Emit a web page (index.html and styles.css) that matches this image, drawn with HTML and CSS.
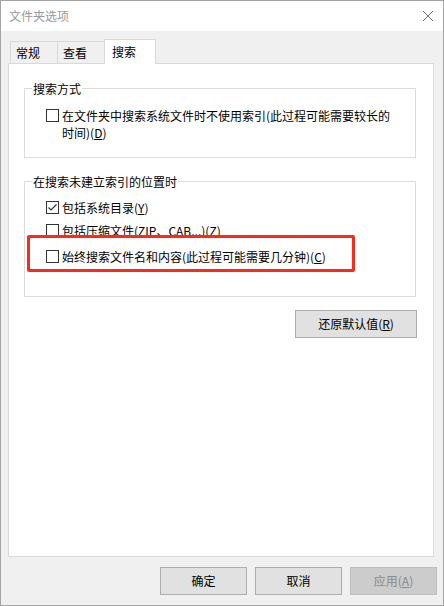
FILE: index.html
```html
<!DOCTYPE html>
<html lang="zh-CN">
<head>
<meta charset="utf-8">
<title>文件夹选项</title>
<link rel="stylesheet" href="styles.css">
</head>
<body>
<div class="window">
  <div class="titlebar">
    <span class="title">文件夹选项</span>
    <svg class="close" width="12" height="12" viewBox="0 0 12 12"><path d="M1 1 L11 11 M11 1 L1 11" stroke="#6e6e6e" stroke-width="1" fill="none"/></svg>
  </div>
  <div class="body">
    <div class="tabs">
      <div class="tab">常规</div>
      <div class="tab">查看</div>
      <div class="tab active">搜索</div>
    </div>
    <div class="panel">
      <div class="group g1">
        <div class="legend">搜索方式</div>
        <div class="row r1">
          <span class="cb"></span>
          <span class="label">在文件夹中搜索系统文件时不使用索引(此过程可能需要较长的<br>时间)(<u>D</u>)</span>
        </div>
      </div>
      <div class="group g2">
        <div class="legend">在搜索未建立索引的位置时</div>
        <div class="row r2">
          <span class="cb checked"><svg width="11" height="11" viewBox="0 0 11 11"><path d="M1.5 5.5 L4 8 L9.5 2.5" stroke="#333" stroke-width="1.2" fill="none"/></svg></span>
          <span class="label">包括系统目录(<u>Y</u>)</span>
        </div>
        <div class="row r3">
          <span class="cb"></span>
          <span class="label">包括压缩文件(ZIP、CAB...)(<u>Z</u>)</span>
        </div>
        <div class="row r4">
          <span class="cb"></span>
          <span class="label">始终搜索文件名和内容(此过程可能需要几分钟)(<u>C</u>)</span>
        </div>
      </div>
      <div class="reset-row">
        <button class="btn reset">还原默认值(<u>R</u>)</button>
      </div>
    </div>
    <div class="footer">
      <button class="btn">确定</button>
      <button class="btn">取消</button>
      <button class="btn disabled">应用(<u>A</u>)</button>
    </div>
  </div>
  <div class="highlight"></div>
</div>
</body>
</html>
```
FILE: styles.css
```css
* { box-sizing: border-box; }
html, body { margin: 0; padding: 0; background: #fff; }
body {
  font-family: "Noto Sans CJK SC", "Noto Sans", sans-serif;
  font-size: 12px;
  color: #000;
}
.window {
  position: relative;
  width: 444px;
  height: 606px;
  border: 1px solid #a3a3a3;
  background: #f0f0f0;
  display: flex;
  flex-direction: column;
}
.titlebar {
  height: 30px;
  background: #fff;
  display: flex;
  align-items: center;
  justify-content: space-between;
  padding: 0 9px 0 8px;
}
.title {
  color: #9a9a9a;
  font-size: 12px;
  line-height: 16px;
}
.close { display: block; }
.body {
  padding: 8px 8px 0 7px;
  flex: 1;
  display: flex;
  flex-direction: column;
}
.tabs {
  display: flex;
  align-items: flex-end;
  margin-left: 2px;
  height: 25px;
  margin-bottom: -1px;
  position: relative;
  z-index: 1;
}
.tab {
  width: 48px;
  height: 22px;
  margin-bottom: 1px;
  border: 1px solid #d9d9d9;
  border-bottom: none;
  background: #f0f0f0;
  padding-left: 5px;
  line-height: 21px;
  margin-right: -1px;
}
.tab.active {
  width: 52px;
  height: 25px;
  margin-bottom: 0;
  background: #fff;
  padding-left: 7px;
  line-height: 23px;
  margin-right: 0;
}
.panel {
  width: 426px;
  height: 494px;
  background: #fff;
  border: 1px solid #d9d9d9;
  padding: 24px 17px 0 15px;
}
.group {
  border: 1px solid #dcdcdc;
}
.g1 { height: 70px; }
.g2 { height: 116px; margin-top: 23px; }
.legend {
  margin: -8px 0 0 7px;
  padding: 0 1px;
  background: #fff;
  width: fit-content;
  line-height: 16px;
}
.row {
  display: flex;
  align-items: flex-start;
  margin-left: 21px;
  line-height: 17px;
}
.cb {
  width: 13px;
  height: 13px;
  border: 1px solid #333;
  background: #fff;
  margin-top: 2px;
  margin-right: 3px;
  flex: none;
  display: flex;
  align-items: center;
  justify-content: center;
}
.cb svg { display: block; }
.r1 { margin-top: 10px; }
.r2 { margin-top: 9px; }
.r3 { margin-top: 6px; }
.r4 { margin-top: 9px; }
u { text-decoration: underline; text-underline-offset: 1px; }
.reset-row {
  display: flex;
  justify-content: flex-end;
  margin-top: 13px;
  margin-right: -1px;
}
.btn {
  font-family: inherit;
  font-size: 12px;
  color: #000;
  background: #e1e1e1;
  border: 1px solid #adadad;
  height: 28px;
  width: 87px;
  padding: 0;
  line-height: 26px;
}
.btn.reset { width: 122px; }
.btn.disabled {
  background: #cccccc;
  border-color: #bfbfbf;
  color: #8a8a8a;
}
.footer {
  display: flex;
  justify-content: flex-end;
  gap: 8px;
  padding-top: 10px;
  margin-right: -2px;
}
.highlight {
  position: absolute;
  left: 26px;
  top: 234px;
  width: 328px;
  height: 37px;
  border: 3px solid #fb2a1c;
  border-radius: 2px;
}
```
